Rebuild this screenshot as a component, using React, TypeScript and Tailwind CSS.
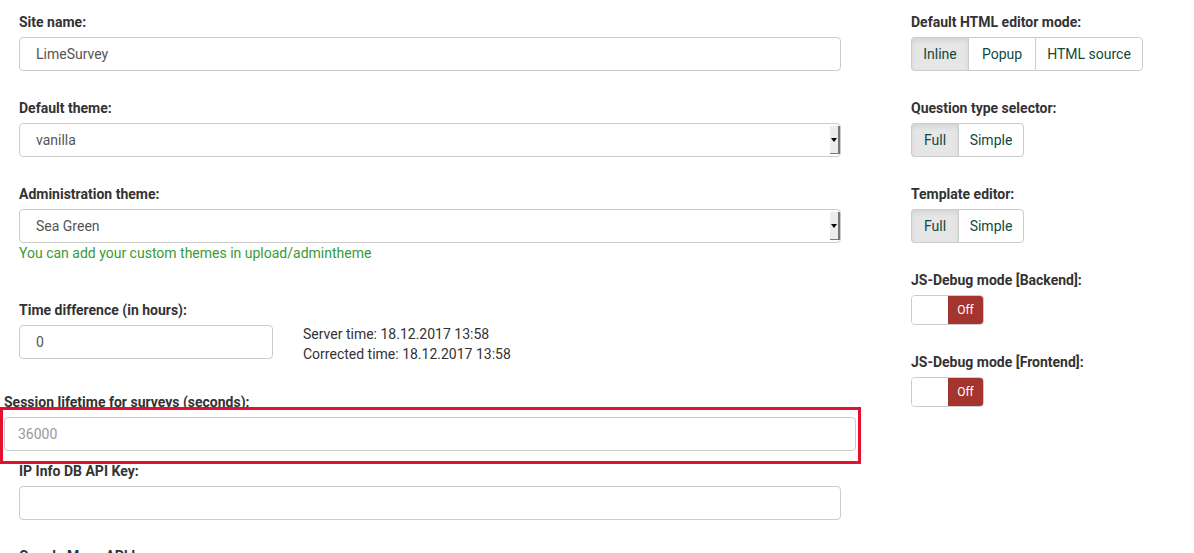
import React from 'react';

const font = { fontFamily: 'Roboto, "Liberation Sans", sans-serif' };

function Label({ children, className = '' }: { children: React.ReactNode; className?: string }) {
  return <div className={`text-[14px] leading-5 font-bold text-[#333] mb-[5px] ${className}`}>{children}</div>;
}

function TextInput({ value, className = '', muted }: { value?: string; className?: string; muted?: boolean }) {
  return (
    <div className={`h-[34px] border border-[#ccc] rounded-[4px] bg-white px-4 flex items-center text-[14px] ${muted ? 'text-[#999]' : 'text-[#555]'} ${className}`}>
      {value}
    </div>
  );
}

function SelectBox({ value }: { value: string }) {
  return (
    <div className="h-[34px] border border-[#ccc] rounded-[4px] bg-white flex items-stretch text-[14px] text-[#555]">
      <div className="flex-1 flex items-center pl-[16px]">{value}</div>
      <div className="w-[10px] my-[2px] bg-[#ececec] border-r-2 border-b border-[#777] flex items-center justify-center">
        <span className="block w-0 h-0 border-l-[3px] border-r-[3px] border-t-[4px] border-l-transparent border-r-transparent border-t-black" />
      </div>
    </div>
  );
}

function BtnGroup({ items, active = 0 }: { items: [string, number][]; active?: number }) {
  return (
    <div className="flex h-[34px]">
      {items.map(([txt, w], i) => (
        <div
          key={txt}
          style={{ width: w }}
          className={`flex items-center justify-center text-[14px] text-[#0f4a3c] border-y border-[#ccc] ${i === 0 ? 'border-l rounded-l-[4px]' : 'border-l'} ${i === items.length - 1 ? 'border-r rounded-r-[4px]' : ''} ${i === active ? 'bg-[#e6e6e6] border-[#adadad] shadow-[inset_0_3px_5px_rgba(0,0,0,0.08)]' : 'bg-white'}`}
        >
          {txt}
        </div>
      ))}
    </div>
  );
}

function OffToggle() {
  return (
    <div className="flex w-[73px] h-[30px] border border-[#ccc] rounded-[4px] overflow-hidden">
      <div className="w-[36px] bg-white" />
      <div className="flex-1 bg-[#a3352e] text-white text-[12px] flex items-center justify-center">Off</div>
    </div>
  );
}

export default function App() {
  return (
    <div style={font} className="w-[1194px] h-[553px] overflow-hidden bg-white flex pt-[12px] pl-[19px]">
      <div className="w-[822px]">
        <Label>Site name:</Label>
        <TextInput value="LimeSurvey" />

        <Label className="mt-[27px]">Default theme:</Label>
        <SelectBox value="vanilla" />

        <Label className="mt-[27px]">Administration theme:</Label>
        <SelectBox value="Sea Green" />
        <div className="text-[14px] leading-5 text-[#3a9a35]">You can add your custom themes in upload/admintheme</div>

        <Label className="mt-[37px]">Time difference (in hours):</Label>
        <div className="flex items-start">
          <TextInput value="0" className="w-[254px]" />
          <div className="ml-[30px] -mt-[1px] text-[14px] leading-5 text-[#333]">
            <div>Server time: 18.12.2017 13:58</div>
            <div>Corrected time: 18.12.2017 13:58</div>
          </div>
        </div>

        <div className="relative -mx-[15px] mt-[28px]">
          <Label>Session lifetime for surveys (seconds):</Label>
          <TextInput value="36000" muted className="pl-[13px]" />
          <div className="absolute left-[-4px] right-[-5px] top-[15px] h-[57px] border-[3px] border-[#e5102d] pointer-events-none" />
        </div>

        <Label className="mt-[10px]">IP Info DB API Key:</Label>
        <TextInput />

        <Label className="mt-[26px]">Google Maps API key:</Label>
      </div>

      <div className="ml-[70px] w-[280px]">
        <Label>Default HTML editor mode:</Label>
        <BtnGroup items={[['Inline', 57], ['Popup', 67], ['HTML source', 108]]} />

        <Label className="mt-[27px]">Question type selector:</Label>
        <BtnGroup items={[['Full', 47], ['Simple', 66]]} />

        <Label className="mt-[27px]">Template editor:</Label>
        <BtnGroup items={[['Full', 47], ['Simple', 66]]} />

        <Label className="mt-[27px]">JS-Debug mode [Backend]:</Label>
        <OffToggle />

        <Label className="mt-[27px]">JS-Debug mode [Frontend]:</Label>
        <OffToggle />
      </div>
    </div>
  );
}
